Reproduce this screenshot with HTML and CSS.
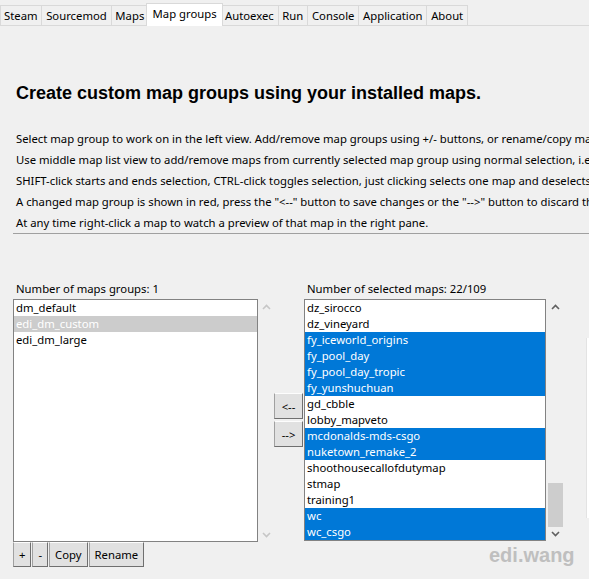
FILE: index.html
```html
<!DOCTYPE html>
<html lang="en">
<head>
    <meta charset="UTF-8">
    <meta name="viewport" content="width=device-width, initial-scale=1.0">
    <title>Map groups</title>
    <link rel="stylesheet" href="styles.css">
</head>
<body>
    <div class="tabs">
        <div class="tab">Steam</div>
        <div class="tab">Sourcemod</div>
        <div class="tab">Maps</div>
        <div class="tab active">Map groups</div>
        <div class="tab">Autoexec</div>
        <div class="tab">Run</div>
        <div class="tab">Console</div>
        <div class="tab">Application</div>
        <div class="tab">About</div>
    </div>

    <div class="page">
        <h1 class="title">Create custom map groups using your installed maps.</h1>
        <div class="help">
            <p>Select map group to work on in the left view. Add/remove map groups using +/- buttons, or rename/copy map groups.</p>
            <p>Use middle map list view to add/remove maps from currently selected map group using normal selection, i.e.</p>
            <p>SHIFT-click starts and ends selection, CTRL-click toggles selection, just clicking selects one map and deselects others.</p>
            <p>A changed map group is shown in red, press the "&lt;--" button to save changes or the "--&gt;" button to discard them.</p>
            <p>At any time right-click a map to watch a preview of that map in the right pane.</p>
        </div>
        <div class="rule"></div>

        <div class="panes">
            <div class="pane groups-pane">
                <div class="pane-label">Number of maps groups: 1</div>
                <div class="list-wrap">
                    <ul class="listbox groups-list">
                        <li>dm_default</li>
                        <li class="inactive-selected">edi_dm_custom</li>
                        <li>edi_dm_large</li>
                    </ul>
                    <div class="scrollbar disabled">
                        <svg class="chevron" width="9" height="6" viewBox="0 0 9 6"><polyline points="1,5 4.5,1.5 8,5" /></svg>
                        <svg class="chevron" width="9" height="6" viewBox="0 0 9 6"><polyline points="1,1 4.5,4.5 8,1" /></svg>
                    </div>
                </div>
                <div class="group-buttons">
                    <button class="btn">+</button>
                    <button class="btn">-</button>
                    <button class="btn">Copy</button>
                    <button class="btn">Rename</button>
                </div>
            </div>

            <div class="move-buttons">
                <button class="btn move">&lt;--</button>
                <button class="btn move">--&gt;</button>
            </div>

            <div class="pane maps-pane">
                <div class="pane-label">Number of selected maps: 22/109</div>
                <div class="list-wrap">
                    <ul class="listbox maps-list">
                        <li>dz_sirocco</li>
                        <li>dz_vineyard</li>
                        <li class="selected">fy_iceworld_origins</li>
                        <li class="selected">fy_pool_day</li>
                        <li class="selected">fy_pool_day_tropic</li>
                        <li class="selected">fy_yunshuchuan</li>
                        <li>gd_cbble</li>
                        <li>lobby_mapveto</li>
                        <li class="selected">mcdonalds-mds-csgo</li>
                        <li class="selected">nuketown_remake_2</li>
                        <li>shoothousecallofdutymap</li>
                        <li>stmap</li>
                        <li>training1</li>
                        <li class="selected">wc</li>
                        <li class="selected">wc_csgo</li>
                    </ul>
                    <div class="scrollbar">
                        <svg class="chevron" width="9" height="6" viewBox="0 0 9 6"><polyline points="1,5 4.5,1.5 8,5" /></svg>
                        <div class="track">
                            <div class="thumb"></div>
                        </div>
                        <svg class="chevron" width="9" height="6" viewBox="0 0 9 6"><polyline points="1,1 4.5,4.5 8,1" /></svg>
                    </div>
                </div>
            </div>

            <div class="pane preview-pane">
                <div class="pane-label changed">Map preview</div>
                <div class="preview-box"></div>
            </div>
        </div>
    </div>

    <div class="watermark">edi.wang</div>
</body>
</html>
```

FILE: styles.css
```css
body {
    margin: 0;
    height: 579px;
    overflow: hidden;
    position: relative;
    background-color: #f0f0f0;
    font-family: "Noto Sans", "Open Sans", sans-serif;
    font-size: 11.3px;
    color: #000;
}

/* tab strip */
.tabs {
    display: flex;
    align-items: flex-end;
    height: 25px;
    border-bottom: 1px solid #d9d9d9;
}

.tab {
    height: 19px;
    line-height: 19px;
    padding: 0 3.8px;
    margin-left: -1px;
    border: 1px solid #d9d9d9;
    border-bottom: none;
    white-space: nowrap;
}

.tab:first-child {
    margin-left: 0;
    padding-left: 3px;
}

.tab.active {
    position: relative;
    z-index: 1;
    height: 22px;
    line-height: 20px;
    margin: 0 -2px -1px -3px;
    padding: 0 5.5px;
    background-color: #fff;
}

/* page content */
.page {
    padding-left: 13px;
}

.title {
    margin: 56px 0 0 3px;
    font: bold 18px/22px "Liberation Sans", Arial, sans-serif;
    white-space: nowrap;
}

.help {
    margin: 24px 0 0 3px;
}

.help p {
    margin: 0;
    line-height: 21px;
    white-space: nowrap;
}

.rule {
    height: 1px;
    background-color: #a0a0a0;
}

.panes {
    display: flex;
    margin-top: 45px;
}

.pane {
    flex-shrink: 0;
}

.pane-label {
    height: 20px;
    line-height: 20px;
    padding-left: 3px;
    white-space: nowrap;
}

.pane-label.changed {
    color: #800000;
}

.list-wrap {
    display: flex;
}

.listbox {
    list-style: none;
    margin: 0;
    padding: 0;
    height: 240px;
    background-color: #fff;
    border: 1px solid #828282;
    overflow: hidden;
}

.listbox li {
    height: 16px;
    line-height: 16px;
    padding-left: 2px;
    white-space: nowrap;
}

.listbox li.selected {
    background-color: #0078d7;
    color: #fff;
}

.listbox li.inactive-selected {
    background-color: #cccccc;
    color: #fff;
}

.groups-list {
    width: 243px;
    height: 241px;
}

.maps-list {
    width: 240px;
}

/* scrollbars */
.scrollbar {
    display: flex;
    flex-direction: column;
    align-items: center;
    justify-content: space-between;
    padding: 5px 0 4px;
}

.groups-pane .scrollbar {
    width: 16px;
}

.maps-pane .scrollbar {
    width: 18px;
}

.chevron polyline {
    fill: none;
    stroke: #606060;
    stroke-width: 1.6;
}

.scrollbar.disabled .chevron polyline {
    stroke: #c6c6c6;
}

.track {
    flex: 1;
    width: 100%;
    display: flex;
    flex-direction: column;
    justify-content: flex-end;
    align-items: center;
    padding: 0 0 4px;
}

.thumb {
    width: 15px;
    height: 44px;
    background-color: #cdcdcd;
}

/* buttons */
.btn {
    font-family: inherit;
    font-size: inherit;
    color: #000;
    background-color: #e1e1e1;
    border: 1px solid;
    border-color: #fdfdfd #6f6f6f #6f6f6f #a0a0a0;
    margin: 0;
    padding: 0 5px;
    height: 25px;
    cursor: pointer;
}

.group-buttons {
    display: flex;
    gap: 1px;
}

.move-buttons {
    display: flex;
    flex-direction: column;
    gap: 2px;
    margin-top: 114px;
    flex-shrink: 0;
    width: 30px;
}

.btn.move {
    width: 29px;
    height: 26px;
    padding: 0;
}

.preview-pane {
    margin-left: 22px;
    width: 200px;
}

.preview-box {
    margin-top: 39px;
    height: 180px;
    background-color: #fff;
    border-left: 1px solid #e3e3e3;
}

.watermark {
    position: absolute;
    left: 489px;
    top: 543px;
    font: bold 20px/24px "Liberation Sans", Arial, sans-serif;
    color: #bfbfbf;
}
```
